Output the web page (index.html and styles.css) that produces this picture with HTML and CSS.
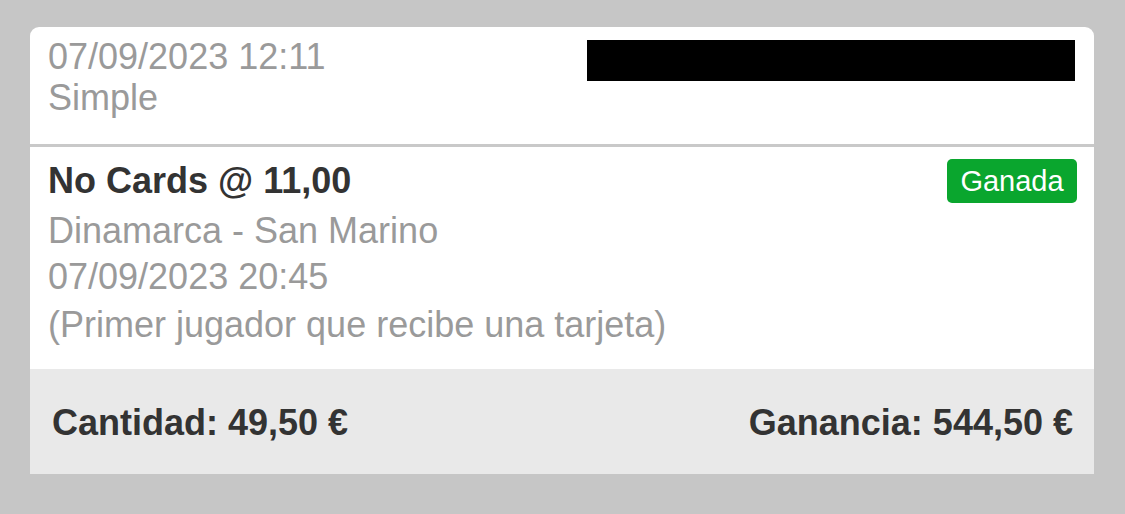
FILE: index.html
```html
<!DOCTYPE html>
<html lang="es">
<head>
<meta charset="utf-8">
<title>Apuesta</title>
<link rel="stylesheet" href="styles.css">
</head>
<body>
<div class="card">
  <div class="head">
    <div class="head-text">
      <div class="line">07/09/2023 12:11</div>
      <div class="line">Simple</div>
    </div>
    <div class="redact"></div>
  </div>
  <div class="body">
    <div class="title-row">
      <div class="title">No Cards @ 11,00</div>
      <div class="badge">Ganada</div>
    </div>
    <div class="meta">Dinamarca - San Marino</div>
    <div class="meta">07/09/2023 20:45</div>
    <div class="meta last">(Primer jugador que recibe una tarjeta)</div>
  </div>
  <div class="foot">
    <div class="amount">Cantidad: 49,50 €</div>
    <div class="amount">Ganancia: 544,50 €</div>
  </div>
</div>
</body>
</html>
```

FILE: styles.css
```css
html, body {
  margin: 0;
  padding: 0;
}
body {
  background: #c6c6c6;
  font-family: "Liberation Sans", Arial, Helvetica, sans-serif;
  height: 514px;
  overflow: hidden;
}
.card {
  margin: 27px 0 0 30px;
  width: 1064px;
  background: #ffffff;
  border-radius: 9px 9px 0 0;
  overflow: hidden;
}
.head {
  box-sizing: border-box;
  height: 120px;
  padding: 9px 19px 0 18px;
  border-bottom: 3px solid #c9c9c9;
  display: flex;
  justify-content: space-between;
  align-items: flex-start;
}
.line {
  font-size: 36px;
  line-height: 41px;
  color: #9a9a9a;
}
.redact {
  margin-top: 4px;
  width: 488px;
  height: 41px;
  background: #000;
}
.body {
  padding: 12px 17px 21px 18px;
}
.title-row {
  display: flex;
  justify-content: space-between;
  align-items: flex-start;
  margin-bottom: 5px;
}
.title {
  font-size: 36px;
  line-height: 44px;
  font-weight: bold;
  color: #333333;
}
.badge {
  box-sizing: border-box;
  height: 44px;
  width: 130px;
  background: #0aa62e;
  color: #ffffff;
  border-radius: 5px;
  font-size: 29px;
  line-height: 44px;
  text-align: center;
}
.meta {
  font-size: 36px;
  line-height: 46px;
  color: #9a9a9a;
}
.meta.last {
  margin-top: 2px;
}
.foot {
  height: 105px;
  background: #e9e9e9;
  display: flex;
  justify-content: space-between;
  align-items: center;
  padding: 0 21px 0 22px;
}
.amount {
  font-size: 36px;
  font-weight: bold;
  color: #333333;
  padding-top: 2px;
}
```
